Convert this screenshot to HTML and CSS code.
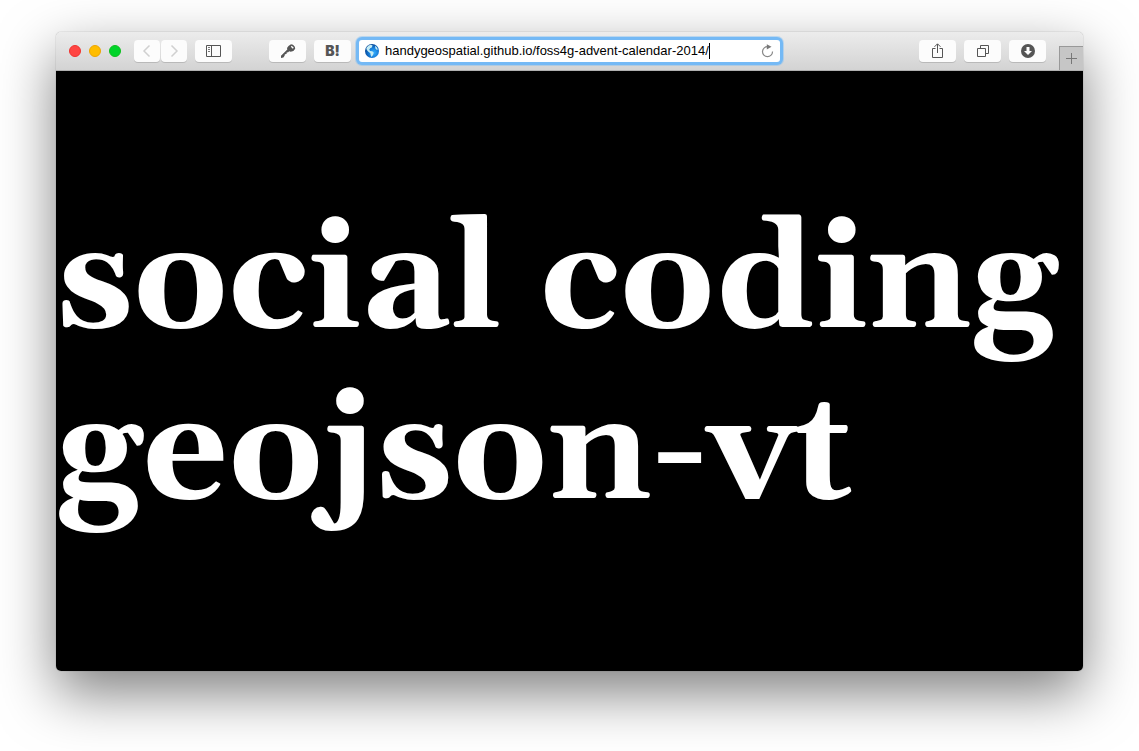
FILE: index.html
```html
<!DOCTYPE html>
<html lang="en">
<head>
<meta charset="utf-8">
<meta name="viewport" content="width=device-width, initial-scale=1">
<title>social coding geojson-vt</title>
<link rel="stylesheet" href="styles.css">
</head>
<body>
<div class="window">
  <header class="toolbar">
    <div class="side side-start">
      <div class="lights">
        <button class="light close" aria-label="Close"></button>
        <button class="light minimize" aria-label="Minimize"></button>
        <button class="light expand" aria-label="Full screen"></button>
      </div>
      <div class="history">
        <button class="tool narrow" aria-label="Back"><svg width="26" height="22" viewBox="0 0 26 22"><path d="M15.500 5.500 10 11l5.500 5.500" fill="none" stroke="#d0d0d0" stroke-width="1.500"/></svg></button>
        <button class="tool narrow" aria-label="Forward"><svg width="26" height="22" viewBox="0 0 26 22"><path d="m10.500 5.500 5.500 5.500-5.500 5.500" fill="none" stroke="#d0d0d0" stroke-width="1.500"/></svg></button>
      </div>
      <button class="tool" aria-label="Sidebar"><svg width="37" height="22" viewBox="0 0 37 22"><path d="M11.500 5.500h14v11h-14zM16.500 5.500v11" fill="none" stroke="#555"/><path d="M13 7.500h2M13 9.500h2M13 11.500h2" stroke="#777"/></svg></button>
      <div class="extensions">
        <button class="tool" aria-label="Password"><svg width="37" height="22" viewBox="0 0 37 22"><path d="M19.500 6 22 4.200l2 .6 1.800 2 .4 2-1.800 2.300-2.700.6-1.500-.5-1 1-1.500.3-.2 1.500-1.600.3-.3 1.500-1.200 1.700-2.400.5v-2.200l6.300-6.200-.3-1.600z" fill="#555"/><path d="m22.300 6.200 2 2" stroke="#fff" stroke-width="1.300"/></svg></button>
        <button class="tool bookmark">B!</button>
      </div>
    </div>
    <form class="address" onsubmit="return false">
      <svg class="globe" width="14" height="14" viewBox="0 0 14 14"><defs><radialGradient id="sea" cx="62%" cy="62%" r="60%"><stop offset="0" stop-color="#35b0ff"/><stop offset=".6" stop-color="#147ad6"/><stop offset="1" stop-color="#0a4c9c"/></radialGradient></defs><circle cx="7" cy="7" r="7" fill="url(#sea)"/><path d="M1.300 4 3.500 1.600 6 .8l1.600.8-.8 1.800-1.600.8-1 1.600.9 1.200 2.200.3 1.500 1.500-.8 2.100-1.500 2-.8-1.700-.3-2-2-1.500-1.600-1.600zM10 1.700l1.600 1.200 1.300 2.500-1.300.4-1.200-1.400z" fill="#c4ecf4"/></svg>
      <input class="url" type="text" aria-label="Address" value="handygeospatial.github.io/foss4g-advent-calendar-2014/" spellcheck="false">
      <span class="caret"></span>
      <button class="reload" aria-label="Reload"><svg width="14" height="14" viewBox="0 0 14 14"><path d="M8 2.700A5 5 0 1 0 12.500 7.500" fill="none" stroke="#888" stroke-width="1.200"/><path d="m6.800.2 4.700 2.600-4.700 2.600z" fill="#777"/></svg></button>
    </form>
    <div class="side side-end">
      <button class="tool" aria-label="Share"><svg width="37" height="22" viewBox="0 0 37 22"><path d="M16.500 8.500h-3v9h10v-9h-3M18.500 13V4M15.500 6.800l3-3 3 3" fill="none" stroke="#555"/></svg></button>
      <button class="tool" aria-label="Tabs"><svg width="37" height="22" viewBox="0 0 37 22"><path d="M13.500 8.500h8v8h-8zM16.500 8.500v-3h8v8h-3" fill="none" stroke="#555"/></svg></button>
      <button class="tool" aria-label="Downloads"><svg width="37" height="22" viewBox="0 0 37 22"><circle cx="19" cy="11" r="7" fill="#555"/><path d="M17.500 7h3v4H23l-4 4-4-4h2.500z" fill="#fff"/></svg></button>
      <button class="new-tab" aria-label="New tab"><svg width="11" height="11" viewBox="0 0 11 11"><path d="M0 5.500h11M5.500 0v11" stroke="#777"/></svg></button>
    </div>
  </header>
  <main class="page">
    <h1 class="headline">social coding<br>geojson-vt</h1>
  </main>
</div>
</body>
</html>
```
FILE: styles.css
```css
* {
  box-sizing: border-box;
}

body {
  margin: 0;
  min-height: 100vh;
  padding: 32px 56px 80px;
  display: flex;
  background: #fff;
  overflow: hidden;
  font-family: "Liberation Sans", Arial, sans-serif;
}

button {
  padding: 0;
  border: 0;
  background: none;
}

svg {
  display: block;
}

.window {
  flex: 1;
  min-width: 0;
  display: flex;
  flex-direction: column;
  border-radius: 5px;
  overflow: hidden;
  box-shadow: 0 0 1px rgba(0, 0, 0, 0.5), 0 22px 56px rgba(0, 0, 0, 0.5);
}

.toolbar {
  display: grid;
  grid-template-columns: 1fr 41% 1fr;
  align-items: center;
  height: 39px;
  border-bottom: 1px solid #b0b0b0;
  background: linear-gradient(#ececec, #d3d3d3);
}

.side {
  display: flex;
  align-items: center;
  gap: 8px;
  height: 100%;
}

.side-start {
  padding: 0 8px 0 13px;
}

.side-end {
  justify-content: flex-end;
}

.lights {
  display: flex;
  gap: 8px;
  margin-right: 5px;
}

.light {
  width: 12px;
  height: 12px;
  border: 1px solid;
  border-radius: 50%;
}

.close {
  background: #ff4543;
  border-color: #f0322f;
}

.minimize {
  background: #ffbd00;
  border-color: #eda500;
}

.expand {
  background: #00d42a;
  border-color: #0dbf1e;
}

.history {
  display: flex;
  gap: 1px;
}

.extensions {
  display: flex;
  gap: 8px;
  margin-left: auto;
}

.tool {
  width: 37px;
  height: 22px;
  border-radius: 4px;
  background: #fcfcfc;
  box-shadow: 0 1px 0 rgba(0, 0, 0, 0.14);
}

.narrow {
  width: 26px;
}

.bookmark {
  color: #555;
  font: 900 14px/22px Inter, sans-serif;
}

.address {
  display: flex;
  align-items: center;
  height: 22px;
  padding: 0 6px;
  border-radius: 3px;
  background: #fff;
  box-shadow: 0 0 0 3px #74b9f5, 0 0 0 4px rgba(116, 185, 245, 0.4);
}

.globe {
  flex: none;
  margin-right: 6px;
}

.url {
  field-sizing: content;
  min-width: 0;
  padding: 0;
  border: 0;
  outline: 0;
  background: none;
  color: #000;
  font: 13px/20px "Liberation Sans", Arial, sans-serif;
}

.caret {
  flex: none;
  width: 1px;
  height: 16px;
  background: #000;
}

.reload {
  flex: none;
  margin-left: auto;
}

.new-tab {
  display: grid;
  place-items: center;
  align-self: flex-end;
  width: 24px;
  height: 24px;
  margin-left: 5px;
  border: 1px solid #999;
  border-width: 1px 0 0 1px;
  background: #c6c6c6;
}

.page {
  flex: 1;
  display: flex;
  align-items: center;
  padding-bottom: 4px;
  background: #000;
}

.headline {
  margin: 0;
  color: #fff;
  font: bold 150px/171px Georgia, Gelasio, "Liberation Serif", serif;
  white-space: nowrap;
}
```
